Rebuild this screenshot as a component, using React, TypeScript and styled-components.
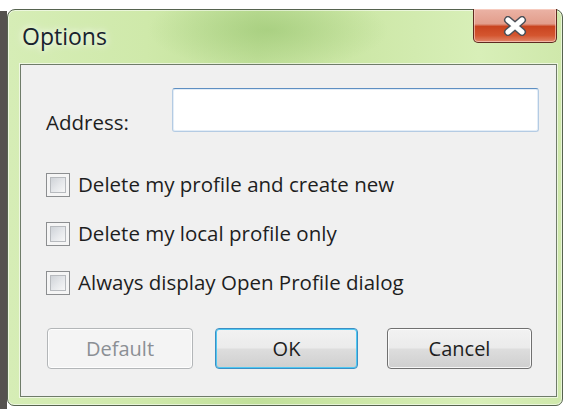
import React, { FunctionComponent } from 'react';
import styled, { createGlobalStyle } from 'styled-components';

const GlobalStyle = createGlobalStyle`
  html, body {
    margin: 0;
    padding: 0;
    background: #ffffff;
  }
  body {
    font-family: 'Open Sans', 'Noto Sans', sans-serif;
    color: #1e1e1e;
  }
`;

const CloseGlyph: FunctionComponent = () => (
  <svg width="26" height="20" viewBox="0 0 26 20">
    <path d="M6 4 L20 16 M20 4 L6 16" stroke="#4a4f57" strokeWidth="8" strokeLinecap="round" />
    <path d="M6 4 L20 16 M20 4 L6 16" stroke="#ffffff" strokeWidth="5" strokeLinecap="round" />
  </svg>
);

const CheckRow: FunctionComponent<{ label: string }> = ({ label }) => (
  <CheckLine>
    <CheckBox />
    <CheckLabel>{label}</CheckLabel>
  </CheckLine>
);

const App: FunctionComponent = () => (
  <>
    <GlobalStyle />
    <Desktop>
      <Window>
        <TitleBar>
          <Title>Options</Title>
          <CloseButton>
            <CloseGlyph />
          </CloseButton>
        </TitleBar>
        <Panel>
          <AddressRow>
            <FieldLabel>Address:</FieldLabel>
            <AddressInput />
          </AddressRow>
          <CheckList>
            <CheckRow label="Delete my profile and create new" />
            <CheckRow label="Delete my local profile only" />
            <CheckRow label="Always display Open Profile dialog" />
          </CheckList>
          <ButtonRow>
            <DialogButton $width={146} $lead={0} disabled>
              Default
            </DialogButton>
            <DialogButton $width={143} $lead={22} $focused>
              OK
            </DialogButton>
            <DialogButton $width={145} $lead={29}>
              Cancel
            </DialogButton>
          </ButtonRow>
        </Panel>
      </Window>
    </Desktop>
  </>
);

const Desktop = styled.div`
  width: 569px;
  height: 409px;
  overflow: hidden;
  box-sizing: border-box;
  padding: 9px 0 0 7px;
  background:
    linear-gradient(#ffffff 0 11px, transparent 11px),
    linear-gradient(90deg, #55524f 0 7px, #ffffff 7px);
`;

const Window = styled.div`
  width: 556px;
  height: 397px;
  box-sizing: border-box;
  border: 1px solid #56634f;
  border-radius: 8px 8px 7px 7px;
  display: flex;
  flex-direction: column;
  background:
    radial-gradient(ellipse 120px 40px at 260px 20px, rgba(150, 195, 110, 0.55), transparent),
    linear-gradient(90deg, #d6edb6 0%, #cfe9aa 25%, #c1e09a 45%, #cce7a6 62%, #d8efb8 85%, #cfe8ab 100%);
  box-shadow: inset 0 0 0 1px rgba(255, 255, 255, 0.55);
`;

const TitleBar = styled.div`
  height: 54px;
  display: flex;
  align-items: flex-start;
`;

const Title = styled.div`
  padding: 12px 0 0 14px;
  font-size: 23px;
  line-height: 29px;
  color: #18222e;
  text-shadow: 0 0 6px rgba(255, 255, 255, 0.9), 0 0 12px rgba(255, 255, 255, 0.7);
`;

const CloseButton = styled.div`
  margin: -1px 5px 0 auto;
  width: 84px;
  height: 34px;
  box-sizing: border-box;
  display: flex;
  align-items: center;
  justify-content: center;
  border: 1px solid #5e2a20;
  border-top: none;
  border-radius: 0 0 5px 5px;
  background: linear-gradient(#ebb3a5 0%, #e29d8b 45%, #c9441f 53%, #d4552f 80%, #e0876a 100%);
  box-shadow: inset 0 0 0 1px rgba(255, 220, 210, 0.6);
`;

const Panel = styled.div`
  flex: 1;
  margin: 0 5px 8px 12px;
  box-sizing: border-box;
  border: 1px solid #6f7c69;
  background: #f0f0f0;
  box-shadow: 0 0 0 1px rgba(255, 255, 255, 0.6);
  display: flex;
  flex-direction: column;
  padding: 23px 17px 0 25px;
`;

const AddressRow = styled.div`
  display: flex;
  align-items: flex-end;
`;

const FieldLabel = styled.label`
  width: 126px;
  font-size: 20.5px;
  line-height: 20px;
`;

const AddressInput = styled.div`
  flex: 1;
  height: 44px;
  box-sizing: border-box;
  border: 1px solid #b4cbe3;
  border-top-color: #5e8fc2;
  border-radius: 3px;
  background: #ffffff;
  box-shadow: inset 0 0 0 1px rgba(200, 220, 240, 0.5);
`;

const CheckList = styled.div`
  margin-top: 40px;
  display: flex;
  flex-direction: column;
  gap: 24px;
`;

const CheckLine = styled.div`
  display: flex;
  align-items: center;
  height: 25px;
`;

const CheckBox = styled.span`
  width: 24px;
  height: 24px;
  box-sizing: border-box;
  border: 1px solid #8c8e90;
  padding: 3px;
  background: #f5f5f5;
  &::before {
    content: '';
    display: block;
    width: 100%;
    height: 100%;
    box-sizing: border-box;
    border: 1px solid #b7babe;
    background: linear-gradient(135deg, #cfd3d8 0%, #e6e8eb 55%, #f7f7f7 100%);
  }
`;

const CheckLabel = styled.span`
  margin-left: 8px;
  font-size: 20.5px;
  line-height: 25px;
`;

const ButtonRow = styled.div`
  margin-top: 33px;
  display: flex;
  padding-left: 1px;
`;

const DialogButton = styled.button<{ $width: number; $lead: number; $focused?: boolean }>`
  width: ${(p) => p.$width}px;
  margin-left: ${(p) => p.$lead}px;
  height: 41px;
  box-sizing: border-box;
  font-family: 'Open Sans', 'Noto Sans', sans-serif;
  font-size: 20px;
  color: #1e1e1e;
  border-radius: 4px;
  border: 1px solid ${(p) => (p.$focused ? '#3c8fc4' : '#707070')};
  background: linear-gradient(#f2f2f2 0%, #ebebeb 48%, #dddddd 52%, #cfcfcf 100%);
  box-shadow: inset 0 0 0 1px ${(p) => (p.$focused ? '#50c8f2' : 'rgba(255, 255, 255, 0.8)')};
  padding: 0;

  &:disabled {
    color: #8b8f94;
    border-color: #b3b6b8;
    background: #f4f4f4;
    box-shadow: inset 0 0 0 1px rgba(255, 255, 255, 0.9);
  }
`;

export default App;
